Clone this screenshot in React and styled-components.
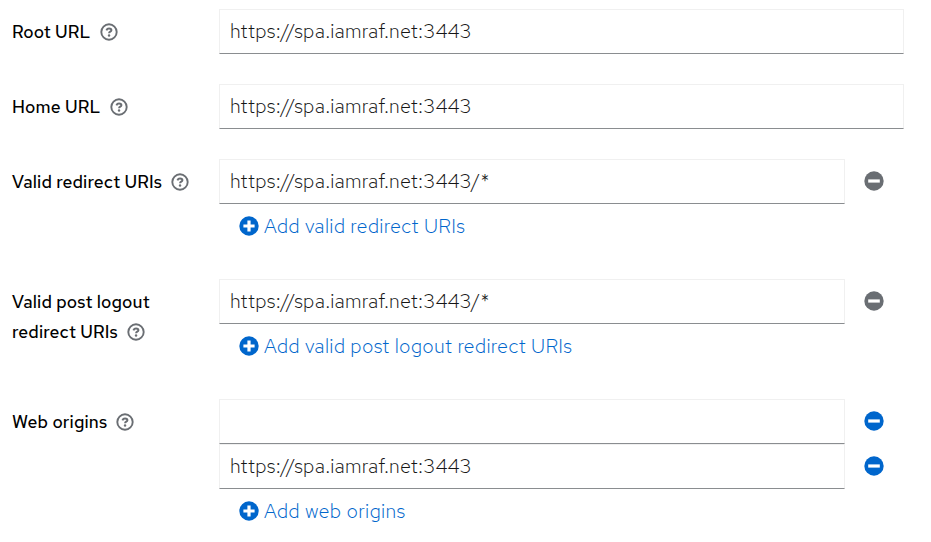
import React from "react";
import styled, { createGlobalStyle } from "styled-components";

const family = '"Red Hat Text", "Open Sans", "Noto Sans", sans-serif';

const Global = createGlobalStyle`
  *, *::before, *::after { box-sizing: border-box; }
  html, body { margin: 0; background: #fff; overflow: hidden; }
  body { color: #151515; font-family: ${family}; }
`;

const Form = styled.form`
  display: flex;
  flex-direction: column;
  gap: 30px;
  width: 931px;
  height: 542px;
  padding: 9px 27px 0 12px;
  background: #fff;
`;

const Group = styled.div`
  display: grid;
  grid-template-columns: 207px 685px;
  align-items: start;
`;

const LabelCell = styled.div`
  padding-top: 8px;
  color: #000;
  font-size: 17.5px;
  line-height: 30px;
  font-weight: 500;
  letter-spacing: 0.16px;
`;

const LabelLine = styled.div`
  display: flex;
  align-items: center;
  height: 30px;
  white-space: nowrap;
`;

const Help = styled.button`
  display: flex;
  padding: 0;
  border: 0;
  margin-left: 9px;
  background: none;
`;

const Fields = styled.div`
  display: flex;
  flex-direction: column;
`;

const FieldRow = styled.div`
  display: flex;
  align-items: center;
  height: 45px;
`;

const Input = styled.input`
  width: ${({ $short }) => ($short ? 626 : 685)}px;
  height: 45px;
  padding: 0 10px 1px;
  border: 1px solid #f0f0f0;
  border-bottom-color: #8a8d90;
  border-radius: 0;
  outline: 0;
  color: #151515;
  background: #fff;
  font: 330 20px ${family};
  letter-spacing: 0.18px;
`;

const Remove = styled.button`
  display: flex;
  padding: 0 0 1px;
  border: 0;
  margin-left: 19px;
  background: none;
  color: ${({ $active }) => ($active ? "#0066cc" : "#6a6e73")};
`;

const Add = styled.button`
  display: flex;
  align-items: center;
  gap: 5px;
  height: 45px;
  padding: 0 0 1px 20px;
  border: 0;
  background: none;
  color: #0066cc;
  font: 330 20px ${family};
  letter-spacing: 0.28px;
  white-space: nowrap;
`;

function HelpIcon() {
  return (
    <svg width="18" height="18" viewBox="0 0 18 18" fill="none" stroke="#6a6e73">
      <circle cx="9" cy="9" r="7.7" strokeWidth="1.9" />
      <path d="M6.4 7.3C6.9 6.1 7.7 5.5 9 5.5c1.5 0 2.4.7 2.4 1.8 0 1.5-2.3 1.3-2.3 2.9" strokeWidth="2" />
      <circle cx="9.05" cy="12.5" r="1.2" fill="#6a6e73" stroke="none" />
    </svg>
  );
}

function CircleIcon({ plus }) {
  return (
    <svg width="20" height="20" viewBox="0 0 20 20">
      <circle cx="10" cy="10" r="9.7" fill="currentColor" />
      <path d={plus ? "M4.4 10h11.2M10 4.4v11.2" : "M4.2 10h11.6"} stroke="#fff" strokeWidth="3.2" />
    </svg>
  );
}

const groups = [
  { label: ["Root URL"], values: ["https://spa.iamraf.net:3443"] },
  { label: ["Home URL"], values: ["https://spa.iamraf.net:3443"] },
  { label: ["Valid redirect URIs"], values: ["https://spa.iamraf.net:3443/*"], add: "Add valid redirect URIs" },
  { label: ["Valid post logout", "redirect URIs"], values: ["https://spa.iamraf.net:3443/*"], add: "Add valid post logout redirect URIs" },
  { label: ["Web origins"], values: ["", "https://spa.iamraf.net:3443"], add: "Add web origins", active: true },
];

export default function App() {
  return (
    <>
      <Global />
      <Form>
        {groups.map((g) => (
          <Group key={g.label[0]}>
            <LabelCell>
              {g.label.map((line, i) => (
                <LabelLine key={line}>
                  <span>{line}</span>
                  {i === g.label.length - 1 && <Help type="button"><HelpIcon /></Help>}
                </LabelLine>
              ))}
            </LabelCell>
            <Fields>
              {g.values.map((v, i) => (
                <FieldRow key={i}>
                  <Input $short={!!g.add} defaultValue={v} />
                  {g.add && <Remove type="button" $active={g.active}><CircleIcon /></Remove>}
                </FieldRow>
              ))}
              {g.add && <Add type="button"><CircleIcon plus /><span>{g.add}</span></Add>}
            </Fields>
          </Group>
        ))}
      </Form>
    </>
  );
}
